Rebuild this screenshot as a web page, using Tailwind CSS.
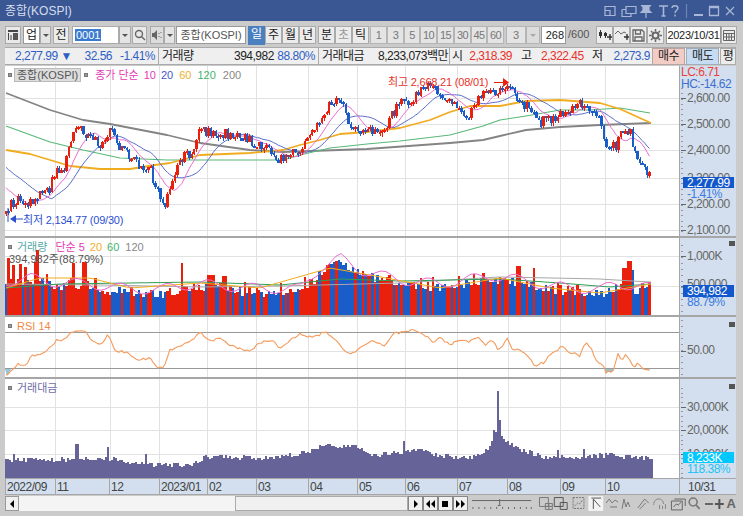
<!DOCTYPE html>
<html lang="ko">
<head>
<meta charset="UTF-8">
<title>종합(KOSPI)</title>
<script src="https://cdn.jsdelivr.net/npm/@tailwindcss/browser@4"></script>
</head>
<body class="w-[743px] h-[516px] overflow-hidden bg-[#cbcbcb] text-[11px] text-[#333] font-['Liberation_Sans','Noto_Sans_CJK_KR',sans-serif]">

<!-- title bar -->
<div class="h-[21px] bg-[#3a5693] flex items-center pl-[5px] pr-[5px] text-[12px] text-[#d5deee]">
	<span>종합(KOSPI)</span>
	<svg class="ml-auto" width="134" height="14" viewBox="0 0 134 14" fill="none" stroke="#a9b8d6" stroke-width="1.2">
		<path d="M1 2.500h10v9h-10zM1 6.500h5v5"/>
		<path d="M22 2.500h10v7h-10zM18 5.500h4M18 5.500v7h9v-3"/>
		<path d="M37 1.500h10l-2 1v4l2 2h-10l2-2v-4zM42 9v5" fill="#a9b8d6"/>
		<path d="M55 2h9M59.500 2v10M57.500 12h4" stroke-width="1.600"/>
		<path d="M68 4c0-3 6-3 6 0 0 2-3 2.500-3 5M71 10.500v2" stroke-width="1.400"/>
		<path d="M82.500 0v14" stroke="#6f84b3"/>
		<path d="M90 11h9" stroke-width="2"/>
		<path d="M105.500 2.500h9v9h-9z M105.500 3.500h9" stroke-width="1.300"/>
		<path d="M122 3l8 8M130 3l-8 8"/>
	</svg>
</div>

<!-- toolbar -->
<div class="h-[26px] pl-[5px] pt-[5px] flex items-start text-[#222] text-[12px]">
	<div class="w-[16px] h-[18px] border border-[#aaa] bg-[#e9e9e9] flex items-center justify-center"><svg width="12" height="12" viewBox="0 0 12 12"><path d="M1 1h10v2h-10z" fill="#444"/><path d="M6 4h5v7h-5z" fill="#555"/><path d="M1.500 4v7M4 6v5" stroke="#444" fill="none"/></svg></div>
	<div class="w-[17px] h-[18px] ml-[2px] border border-[#999] bg-white text-center leading-[16px]">업</div>
	<div class="w-[11px] h-[18px] border border-[#aaa] bg-[#e4e4e4] flex items-center justify-center"><div class="w-0 h-0 border-x-[3px] border-x-transparent border-t-[3px] border-t-[#555]"></div></div>
	<div class="w-[16px] h-[18px] ml-[2px] border border-[#aaa] bg-[#ececec] text-center leading-[16px]">전</div>
	<div class="w-[47px] h-[18px] ml-[3px] border border-[#aaa] bg-white pl-[2px] leading-[16px]"><span class="bg-[#3a7bd0] text-white text-[11px] px-px">0001</span></div>
	<div class="w-[12px] h-[18px] border border-[#aaa] bg-[#e4e4e4] flex items-center justify-center"><div class="w-0 h-0 border-x-[3px] border-x-transparent border-t-[3px] border-t-[#555]"></div></div>
	<div class="w-[15px] h-[18px] ml-px border border-[#aaa] bg-[#e9e9e9] flex items-center justify-center"><svg width="12" height="12" viewBox="0 0 12 12" fill="none" stroke="#666" stroke-width="1.400"><circle cx="5" cy="5" r="3.500"/><path d="M7.500 7.500l3.500 3.500"/></svg></div>
	<div class="w-[14px] h-[18px] ml-[3px] border border-[#aaa] bg-[#dcdcdc] flex items-center justify-center"><svg width="10" height="10" viewBox="0 0 10 10"><path d="M0 3h2l3-3v10l-3-3h-2z" fill="#666"/><path d="M7 3v1M7 6v1M9 2v1M9 7v1" stroke="#666"/></svg></div>
	<div class="w-[11px] h-[18px] border border-[#aaa] bg-[#e4e4e4] flex items-center justify-center"><div class="w-0 h-0 border-x-[3px] border-x-transparent border-t-[3px] border-t-[#555]"></div></div>
	<div class="w-[70px] h-[18px] ml-px border border-[#999] bg-white text-center leading-[16px] text-[#555] text-[11px]">종합(KOSPI)</div>
	<div class="flex ml-[2px]">
		<div class="w-[17px] h-[19px] bg-[#4a80c0] text-white text-center leading-[17px]">일</div>
		<div class="w-[17px] h-[18px] border border-[#aaa] bg-[#ececec] text-center leading-[16px]">주</div>
		<div class="w-[17px] h-[18px] border border-[#aaa] bg-[#ececec] text-center leading-[16px]">월</div>
		<div class="w-[17px] h-[18px] border border-[#aaa] bg-[#ececec] text-center leading-[16px]">년</div>
	</div>
	<div class="flex ml-[2px]">
		<div class="w-[17px] h-[18px] border border-[#aaa] bg-[#ececec] text-center leading-[16px]">분</div>
		<div class="w-[17px] h-[18px] border border-[#aaa] bg-[#ececec] text-center leading-[16px] text-[#999]">초</div>
		<div class="w-[17px] h-[18px] border border-[#aaa] bg-[#ececec] text-center leading-[16px]">틱</div>
	</div>
	<div class="flex ml-[1px] text-[#777] text-[11px] tracking-[-0.5px]">
		<div class="w-[17px] h-[18px] border border-[#b5b5b5] bg-[#e4e4e4] text-center leading-[16px]">1</div>
		<div class="w-[17px] h-[18px] border border-[#b5b5b5] bg-[#e4e4e4] text-center leading-[16px]">3</div>
		<div class="w-[16px] h-[18px] border border-[#b5b5b5] bg-[#e4e4e4] text-center leading-[16px]">5</div>
		<div class="w-[17px] h-[18px] border border-[#b5b5b5] bg-[#e4e4e4] text-center leading-[16px]">10</div>
		<div class="w-[17px] h-[18px] border border-[#b5b5b5] bg-[#e4e4e4] text-center leading-[16px]">15</div>
		<div class="w-[17px] h-[18px] border border-[#b5b5b5] bg-[#e4e4e4] text-center leading-[16px]">30</div>
		<div class="w-[16px] h-[18px] border border-[#b5b5b5] bg-[#e4e4e4] text-center leading-[16px]">45</div>
		<div class="w-[17px] h-[18px] border border-[#b5b5b5] bg-[#e4e4e4] text-center leading-[16px]">60</div>
	</div>
	<div class="w-[20px] h-[18px] ml-[2px] border border-[#b5b5b5] bg-[#e4e4e4] text-center leading-[16px] text-[#777] text-[11px]">3</div>
	<div class="w-[14px] h-[18px] border border-[#b5b5b5] bg-[#dcdcdc] flex items-center justify-center"><div class="w-0 h-0 border-x-[3px] border-x-transparent border-t-[3px] border-t-[#aaa]"></div></div>
	<div class="w-[25px] h-[18px] ml-px border border-[#999] bg-white text-right pr-px leading-[16px] text-[11px]">268</div>
	<div class="w-[30px] h-[18px] pl-[2px] leading-[17px] text-[#555] text-[11px]">/600</div>
	<div class="flex">
		<div class="w-[17px] h-[18px] border border-[#aaa] bg-[#ececec] flex items-center justify-center"><svg width="14" height="12" viewBox="0 0 14 12"><path d="M2.500 1v8M7.500 3v6" stroke="#333"/><path d="M1 3h3v4h-3zM6 4h3v3h-3z" fill="#333"/><path d="M12 5v6M9 8h5" stroke="#333" stroke-width="1.400"/></svg></div>
		<div class="w-[17px] h-[18px] border border-[#aaa] bg-[#ececec] flex items-center justify-center"><svg width="14" height="12" viewBox="0 0 14 12" fill="none" stroke="#666"><path d="M0 5l3-3 3 3 3-2 2 1"/><path d="M12 5v6M9 8h5" stroke="#333" stroke-width="1.400"/></svg></div>
		<div class="w-[17px] h-[18px] border border-[#aaa] bg-[#ececec] flex items-center justify-center"><svg width="13" height="13" viewBox="0 0 13 13" fill="none" stroke="#666" stroke-width="1.300"><path d="M1 1h9l2 2v9h-11z"/><path d="M3.500 1v4h5v-4M3 12v-4h7v4"/></svg></div>
		<div class="w-[17px] h-[18px] border border-[#aaa] bg-[#ececec] flex items-center justify-center"><svg width="13" height="13" viewBox="0 0 13 13" fill="none" stroke="#666" stroke-width="2"><circle cx="6.500" cy="6.500" r="3"/><path d="M6.500 0v2.500M6.500 10.500v2.500M0 6.500h2.500M10.500 6.500h2.500M2 2l1.500 1.500M9.500 9.500l1.500 1.500M11 2l-1.500 1.500M3.500 9.500l-1.500 1.500" stroke-width="1.500"/></svg></div>
	</div>
	<div class="w-[55px] h-[18px] ml-[2px] border border-[#999] bg-white text-center leading-[16px] text-[11px] tracking-[-0.3px]">2023/10/31</div>
	<div class="w-[16px] h-[18px] border border-[#aaa] bg-[#ececec] flex items-center justify-center"><svg width="12" height="12" viewBox="0 0 12 12" fill="none" stroke="#666"><path d="M.500 1.500h11v10h-11zM.500 4.500h11M3.500 4.500v7M6 4.500v7M8.500 4.500v7M.500 8h11"/></svg></div>
</div>

<!-- quote strip -->
<div class="h-[18px] ml-[5px] mr-[7px] flex items-center bg-[#efefef] border-y border-[#aaa] whitespace-nowrap text-[#222] text-[12px] tracking-[-0.5px]">
	<div class="w-[65px] pl-[10px] text-[#2f5fc4]">2,277.99 ▼</div>
	<div class="w-[42px] text-right text-[#2f5fc4]">32.56</div>
	<div class="w-[43px] text-right text-[#2f5fc4]">-1.41%</div>
	<div class="w-[76px] pl-[3px] ml-[3px] border-l border-[#aaa]">거래량</div>
	<div class="w-[37px] text-right">394,982</div>
	<div class="w-[44px] text-right text-[#2f5fc4]">88.80%</div>
	<div class="w-[60px] pl-[3px] ml-[3px] border-l border-[#aaa]">거래대금</div>
	<div class="w-[70px] text-right">8,233,073백만</div>
	<div class="w-[20px] pl-[2px] ml-[1px] border-l border-[#aaa]">시</div>
	<div class="w-[43px] text-right text-[#e8312a]">2,318.39</div>
	<div class="w-[29px] pl-[9px]">고</div>
	<div class="w-[42px] text-right text-[#e8312a]">2,322.45</div>
	<div class="w-[29px] pl-[9px]">저</div>
	<div class="w-[38px] text-right text-[#2f5fc4] overflow-hidden">2,273.9</div>
	<div class="w-[33px] h-[17px] ml-[2px] bg-[#f2cdc6] border border-[#b9a5a0] text-center leading-[15px]">매수</div>
	<div class="w-[33px] h-[17px] ml-px bg-[#c5dcf2] border border-[#a0adb9] text-center leading-[15px]">매도</div>
	<div class="w-[16px] h-[17px] ml-px bg-[#ececec] border border-[#aaa] text-center leading-[15px]">평</div>
</div>

<!-- chart panels -->
<div class="mt-px ml-[5px] w-[731px] flex flex-col">
	<div class="relative flex h-[172px] bg-white">
		<svg id="pricePlot" width="674" height="172" viewBox="5 66 674 172"></svg>
		<svg id="priceAxis" width="57" height="172" viewBox="679 66 57 172" class="bg-[#d3dfee]"></svg>
		<div class="absolute left-[3px] top-px flex items-center text-[11px] whitespace-nowrap">
			<span class="w-[4px] h-[4px] bg-[#999] border border-[#777] mr-[2px]"></span>
			<span class="bg-[#ddd] border border-[#bbb] text-[#555] px-[2px] leading-[12px]">종합(KOSPI)</span>
			<span class="w-[4px] h-[4px] bg-[#999] border border-[#777] ml-[3px] mr-[7px]"></span>
			<span class="text-[#e23bb5]">종가 단순</span>
			<span class="text-[#e23bb5] ml-[5px]">10</span>
			<span class="text-[#3f55c8] ml-[5px]">20</span>
			<span class="text-[#eeb02b] ml-[6px]">60</span>
			<span class="text-[#43b46a] ml-[6px]">120</span>
			<span class="text-[#888] ml-[7px]">200</span>
		</div>
		<div class="absolute left-[383px] top-[8px] text-[11px] tracking-[-0.2px] text-[#e8312a] whitespace-nowrap">최고 2,668.21 (08/01)</div>
		<div class="absolute left-[18px] top-[146px] text-[11px] tracking-[-0.2px] text-[#2c4fcf] whitespace-nowrap">최저 2,134.77 (09/30)</div>
	</div>
	<div class="relative flex h-[79px] bg-white">
		<svg id="volPlot" width="674" height="79" viewBox="5 238 674 79"></svg>
		<svg id="volAxis" width="57" height="79" viewBox="679 238 57 79" class="bg-[#d3dfee]"></svg>
		<div class="absolute left-[3px] top-[1px] flex items-center text-[11px] whitespace-nowrap">
			<span class="w-[4px] h-[4px] bg-[#999] border border-[#777] mr-[5px]"></span>
			<span class="text-[#55a8a8]">거래량</span>
			<span class="text-[#e23bb5] ml-[8px]">단순 5</span>
			<span class="text-[#eeb02b] ml-[5px]">20</span>
			<span class="text-[#43b46a] ml-[5px]">60</span>
			<span class="text-[#888] ml-[6px]">120</span>
		</div>
		<div class="absolute left-[4px] top-[13px] text-[11px] text-[#555] whitespace-nowrap">394,982주(88.79%)</div>
	</div>
	<div class="relative flex h-[62px] bg-white">
		<svg id="rsiPlot" width="674" height="62" viewBox="5 317 674 62"></svg>
		<svg id="rsiAxis" width="57" height="62" viewBox="679 317 57 62" class="bg-[#d3dfee]"></svg>
		<div class="absolute left-[3px] top-[1px] flex items-center text-[11px] whitespace-nowrap">
			<span class="w-[4px] h-[4px] bg-[#999] border border-[#777] mr-[5px]"></span>
			<span class="text-[#f08a45]">RSI 14</span>
		</div>
	</div>
	<div class="relative flex h-[99px] bg-white">
		<svg id="moneyPlot" width="674" height="99" viewBox="5 379 674 99"></svg>
		<svg id="moneyAxis" width="57" height="99" viewBox="679 379 57 99" class="bg-[#d3dfee]"></svg>
		<div class="absolute left-[3px] top-[1px] flex items-center text-[11px] whitespace-nowrap">
			<span class="w-[4px] h-[4px] bg-[#999] border border-[#777] mr-[5px]"></span>
			<span class="text-[#6e6ea8]">거래대금</span>
		</div>
	</div>
	<!-- date axis -->
	<svg id="dateAxis" width="731" height="17" viewBox="5 478 731 17" class="bg-[#d3dfee]"></svg>
</div>

<!-- scroll bar and playback row -->
<div class="h-[15px] mt-px ml-[5px] w-[731px] flex items-stretch">
	<div class="w-[14px] bg-[#f0f0f0] border border-[#999] flex items-center justify-center"><div class="w-0 h-0 border-y-[4px] border-y-transparent border-r-[4px] border-r-black"></div></div>
	<div class="w-[219px] bg-[#f4f4f4]"></div>
	<div class="w-[175px] bg-[#f0f0f0] border border-[#aaa]"></div>
	<div class="w-[15px] bg-[#f0f0f0] border border-[#888] flex items-center justify-center"><div class="w-0 h-0 border-y-[4px] border-y-transparent border-l-[4px] border-l-black"></div></div>
	<div class="w-[15px] bg-[#f0f0f0] border border-[#888] flex items-center justify-center"><svg width="9" height="8" viewBox="0 0 9 8"><path d="M4 0v8l-4-4zM9 0v8l-4-4z"/></svg></div>
	<div class="w-[15px] bg-[#f0f0f0] border border-[#888] flex items-center justify-center"><div class="w-[6px] h-[6px] bg-black"></div></div>
	<div class="w-[15px] bg-[#f0f0f0] border border-[#888] flex items-center justify-center"><svg width="9" height="8" viewBox="0 0 9 8"><path d="M0 0v8l4-4zM5 0v8l4-4z"/></svg></div>
	<svg width="68" height="15" viewBox="0 0 68 15" class="ml-[2px]" stroke="#666" fill="none">
		<path d="M2 4.500h60M30 3v6M28 9.500h3" stroke-width="1"/>
		<path d="M3 11v2M9 11v2M15 11v2M21 11v2M27 11v2M33 11v2M39 11v2M45 11v2M51 11v2M57 11v2M62 11v2" stroke-width="1"/>
	</svg>
	<svg width="197" height="15" viewBox="0 0 197 15" fill="none" stroke="#777">
		<path d="M2.500 1.500h9v9h-9zM8.500 7.500h7v6h-7zM12 7.500v6M8.500 10.500h7"/>
		<path d="M17.500 1.500h9v9h-9zM23.500 6.500h7v7h-7z" stroke="#555"/>
		<path d="M36.500 1.500h11v11h-11zM38 10l3-3 2 1 3-4" stroke-dasharray="2 1"/>
		<rect x="52" y="0" width="15" height="15" fill="#f4f4f4" stroke="none"/>
		<path d="M55 2h10M57 3v10M57 3l7 8" stroke="#555"/>
		<path d="M70 7l3-4 3 4 3-3 3 2M74 11h7"/>
		<path d="M86 13l2-10 2 8 2-5 2 5"/>
		<path d="M102 12l7-9 4 4M104 13l6-6"/>
		<path d="M118 9c0-8 10-8 10-1M124 9v4M127 10v3M130 8v5" stroke="#888"/>
		<path d="M136 5h11v9h-11zM139 3h11v7M138 11l3-3 2 1 3-3" stroke="#666"/>
		<circle cx="158" cy="6" r="4" stroke="#777" stroke-width="1.600"/><path d="M161 9l3.500 4" stroke="#777" stroke-width="1.800"/>
		<path d="M170 8h8" stroke="#666" stroke-width="2"/>
		<path d="M180 8h9M184.500 3v10" stroke="#555" stroke-width="2"/>
	</svg>
	<span class="ml-[-5px] text-[13px] font-bold leading-[15px] text-[#666]">A</span>
</div>

<script>
// seeded so every render is the same
let seed = 20231031
function rnd() {
	seed = (seed * 1664525 + 1013904223) % 4294967296
	return seed / 4294967296
}
function lerp(pts, x) {
	if (x <= pts[0][0]) return pts[0][1]
	for (let i = 1; i < pts.length; i++) {
		if (x <= pts[i][0]) {
			const t = (x - pts[i - 1][0]) / (pts[i][0] - pts[i - 1][0])
			return pts[i - 1][1] + (pts[i][1] - pts[i - 1][1]) * t
		}
	}
	return pts[pts.length - 1][1]
}
function poly(pts, color, w) {
	return `<polyline fill="none" stroke="${color}" stroke-width="${w}" stroke-linejoin="round" points="${pts.map(p => p[0].toFixed(1) + ',' + p[1].toFixed(1)).join(' ')}"/>`
}
function txt(x, y, s, color, extra) {
	return `<text x="${x}" y="${y}" fill="${color}" font-size="12" letter-spacing="-0.5" font-family="Liberation Sans, Noto Sans CJK KR, sans-serif" ${extra || ''}>${s}</text>`
}

const RED = '#e8200c', BLUE = '#1a5cc8', GRID = '#e2e2e2', BORDER = '#a6a6a6'
const vx = [55, 110, 159, 207, 256, 308, 357, 405, 457, 508, 560, 605]

const pricePath = [[5,208],[13,203],[20,195],[25,207],[30,200],[40,195],[50,188],[55,172],[65,165],[75,130],[80,128],[90,138],[100,143],[110,127],[115,141],[125,155],[135,158],[140,165],[150,168],[155,185],[160,195],[165,205],[170,185],[175,170],[185,155],[195,152],[200,128],[205,133],[215,133],[230,135],[245,138],[260,145],[270,150],[280,160],[290,155],[300,148],[310,135],[320,120],[330,103],[340,103],[345,112],[350,125],[360,130],[375,130],[385,127],[390,115],[400,105],[410,100],[420,90],[430,87],[440,95],[450,100],[460,110],[470,115],[480,95],[490,92],[500,90],[510,92],[520,100],[530,110],[540,122],[550,118],[555,120],[565,110],[575,110],[585,100],[590,108],[600,120],[605,145],[615,148],[620,135],[630,133],[635,155],[645,172],[652,180]]
const ma200 = [[6,93],[50,110],[83,120],[110,124],[167,135],[200,143],[250,150],[283,152],[367,149],[450,143],[483,140],[500,136],[526,130],[560,127],[600,125],[651,123]]
const ma120 = [[6,126],[50,142],[83,150],[120,158],[167,160],[250,160],[283,160],[300,155],[330,148],[367,144],[400,141],[450,135],[483,126],[500,120],[526,116],[560,110],[590,110],[620,108],[650,113]]
const ma60 = [[6,150],[30,154],[50,160],[70,166],[100,169],[130,169],[155,165],[170,163],[200,155],[250,153],[283,150],[300,145],[320,140],[340,134],[367,132],[400,128],[430,120],[450,112],[470,106],[500,106],[526,101],[560,100],[600,103],[620,109],[651,123]]

const N = 268, STEP = 2.41
const closes = []
for (let i = 0; i < N; i++) closes.push(lerp(pricePath, 6 + i * STEP) + (rnd() - 0.5) * 11)
function movAvg(arr, n, before) {
	return arr.map((_, i) => {
		let s = 0
		for (let k = i - n + 1; k <= i; k++) s += k < 0 ? before : arr[k]
		return [6 + i * STEP, s / n]
	})
}

// price panel
let h = ''
for (const y of [98, 124, 150, 178, 204, 230]) h += `<rect x="5" y="${y}" width="674" height="1" fill="${GRID}"/>`
for (const x of vx) h += `<rect x="${x}" y="66" width="1" height="172" fill="${GRID}"/>`
h += poly(ma200, '#848484', 1.8) + poly(ma120, '#58b878', 1.1) + poly(ma60, '#f0ac1e', 1.8)
h += poly(movAvg(closes, 20, 165), '#5a6ec8', 1) + poly(movAvg(closes, 10, 185), '#ec6cd0', 1)
closes.forEach((c, i) => {
	const x = Math.round(5 + i * STEP)
	const w = Math.round(5 + (i + 1) * STEP) - x
	const prev = i ? closes[i - 1] : c + 3
	let top = Math.min(c, prev), bot = Math.max(c, prev)
	if (bot - top < 2) bot = top + 2
	const col = c < prev ? RED : BLUE
	const wt = top - rnd() * 2.5, wb = bot + rnd() * 3
	h += `<rect x="${x + 1}" y="${wt.toFixed(0)}" width="1" height="${(wb - wt).toFixed(0)}" fill="${col}"/>`
	h += `<rect x="${x}" y="${top.toFixed(0)}" width="${w}" height="${(bot - top).toFixed(0)}" fill="${col}"/>`
})
// high and low markers
h += `<path d="M494 82.500h9" stroke="${RED}"/><path d="M503 78l6 4.500-6 4.500z" fill="${RED}"/>`
h += `<path d="M8 208v14" stroke="#2c4fcf"/><path d="M10 219l6-4v8z" fill="#2c4fcf"/><path d="M14 219h9" stroke="#2c4fcf"/>`
h += `<rect x="5" y="236" width="674" height="2" fill="${BORDER}"/>`
pricePlot.innerHTML = h

function axisTicks(y0, y1, step) {
	let s = ''
	for (let y = y0; y < y1; y += step) s += `<rect x="681" y="${Math.round(y)}" width="2" height="1" fill="#999"/>`
	return s
}
let a = axisTicks(88, 238, 5.3)
a += txt(681, 76, 'LC:6.71', '#e8413a') + txt(681, 88, 'HC:-14.62', '#3c6fd0')
for (const [y, s] of [[98, '2,600.00'], [124, '2,500.00'], [150, '2,400.00'], [178, '2,300.00'], [204, '2,200.00'], [230, '2,100.00']]) {
	a += `<rect x="681" y="${y}" width="5" height="1" fill="#666"/>` + txt(687, y + 4, s, '#666')
}
a += `<rect x="683" y="177" width="51" height="11" fill="#1258cc"/>` + txt(687, 187, '2,277.99', '#fff') + txt(687, 198, '-1.41%', '#3c7be0')
a += `<rect x="679" y="66" width="1" height="172" fill="${BORDER}"/><rect x="679" y="236" width="57" height="2" fill="${BORDER}"/>`
priceAxis.innerHTML = a

// volume panel
h = ''
for (const y of [256, 286]) h += `<rect x="5" y="${y}" width="674" height="1" fill="${GRID}"/>`
for (const x of vx) h += `<rect x="${x}" y="238" width="1" height="79" fill="${GRID}"/>`
const volBase = [[5,286],[30,282],[50,286],[90,288],[120,292],[160,294],[175,290],[200,288],[250,292],[300,293],[320,272],[340,262],[360,274],[400,284],[440,288],[490,280],[510,282],[550,290],[600,294],[615,288],[640,290],[652,292]]
// [from x, to x, top y, colour] for the bars that stand out in the picture
const volPeaks = [[7,9,258,RED],[12,14,265,RED],[19,21,264,RED],[24,26,267,RED],[33,35,262,RED],[36,38,250,RED],[40,42,278,BLUE],[72,74,263,RED],[82,85,262,RED],[180,182,263,RED],[206,212,275,RED],[222,225,276,RED],[516,518,266,RED],[531,533,268,RED],[622,624,268,RED],[627,629,261,RED],[630,633,270,BLUE],[641,643,283,RED]]
const volX = []
for (let i = 0; i < N; i++) {
	const x = Math.round(5 + i * STEP)
	const w = Math.round(5 + (i + 1) * STEP) - x
	const prev = i ? closes[i - 1] : closes[0]
	const up = closes[i] < prev
	let t = lerp(volBase, x) + (rnd() - 0.5) * 9
	let col = up ? RED : BLUE
	if (up && rnd() > 0.7) t -= 8
	for (const p of volPeaks) if (x >= p[0] && x <= p[1]) { t = p[2]; col = p[3] }
	h += `<rect x="${x}" y="${t.toFixed(0)}" width="${w}" height="${(315 - t).toFixed(0)}" fill="${col}"/>`
}
const volA = [], volB = [], volC = [], volD = []
for (let x = 6; x <= 651; x += 5) {
	const b = lerp(volBase, x)
	volA.push([x, b - 4 + Math.sin(x / 7) * 5])
	volB.push([x, lerp([[6,288],[40,278],[90,278],[130,288],[200,283],[260,288],[330,268],[370,275],[440,288],[500,278],[550,288],[600,293],[650,284]], x)])
	volC.push([x, lerp([[6,288],[60,284],[130,283],[200,282],[280,285],[340,279],[400,281],[500,279],[560,283],[610,287],[650,284]], x)])
	volD.push([x, lerp([[6,284],[100,285],[200,287],[280,286],[400,283],[500,277],[600,279],[650,282]], x)])
}
h += poly(volD, '#a8a8a8', 1) + poly(volC, '#2f9e55', 1) + poly(volB, '#f0ac1e', 1) + poly(volA, '#ec6cd0', 1)
h += `<rect x="5" y="315" width="674" height="2" fill="${BORDER}"/>`
volPlot.innerHTML = h
a = axisTicks(245, 315, 6)
a += `<rect x="681" y="256" width="5" height="1" fill="#666"/>` + txt(687, 260, '1,000K', '#666')
a += `<rect x="681" y="286" width="5" height="1" fill="#666"/>` + txt(687, 288, '500,000', '#666')
a += `<rect x="683" y="285" width="51" height="12" fill="#1258cc"/>` + txt(687, 295, '394,982', '#fff') + txt(687, 306, '88.79%', '#3c7be0')
a += `<rect x="729" y="241" width="6" height="5" fill="#555"/><rect x="679" y="238" width="1" height="79" fill="${BORDER}"/><rect x="679" y="315" width="57" height="2" fill="${BORDER}"/>`
volAxis.innerHTML = a

// RSI panel
h = ''
for (const x of vx) h += `<rect x="${x}" y="317" width="1" height="62" fill="${GRID}"/>`
h += `<rect x="5" y="351" width="674" height="1" fill="${GRID}"/><rect x="5" y="332" width="674" height="1" fill="#999"/><rect x="5" y="368" width="674" height="1" fill="#999"/>`
h += `<path d="M5 369h6l-4 7zM605 369h9l-2 3h-6zM641 369h10l-4 1z" fill="#8fc8e0"/>`
const rsi = [[6,376],[12,370],[18,364],[25,365],[33,355],[42,354],[50,347],[57,340],[65,340],[72,331],[78,332],[85,330],[90,340],[100,345],[108,335],[115,350],[125,352],[130,355],[140,360],[150,358],[158,367],[163,369],[170,350],[180,345],[190,342],[200,331],[210,342],[220,337],[230,345],[245,350],[250,350],[262,342],[272,340],[280,349],[290,340],[300,334],[312,338],[325,332],[335,340],[345,352],[352,354],[360,348],[372,340],[385,345],[395,333],[405,332],[415,330],[425,335],[432,342],[440,338],[450,345],[458,340],[468,342],[478,336],[486,345],[493,340],[498,351],[508,338],[511,350],[521,350],[533,363],[536,366],[545,362],[550,354],[563,346],[570,353],[576,352],[579,357],[586,342],[593,352],[596,360],[605,368],[606,372],[613,371],[618,354],[621,360],[626,355],[635,368],[638,362],[641,368],[646,369],[650,370]]
const rsiLine = []
for (let i = 0; i < N; i++) {
	const x = 6 + i * STEP
	rsiLine.push([x, lerp(rsi, x) + (rnd() - 0.5) * 2.5])
}
h += poly(rsiLine, '#f59a5c', 1.1)
h += `<rect x="5" y="377" width="674" height="2" fill="${BORDER}"/>`
rsiPlot.innerHTML = h
a = axisTicks(320, 377, 6)
a += `<rect x="681" y="351" width="5" height="1" fill="#666"/>` + txt(687, 354, '50.00', '#666')
a += `<rect x="729" y="322" width="6" height="5" fill="#555"/><rect x="679" y="317" width="1" height="62" fill="${BORDER}"/><rect x="679" y="377" width="57" height="2" fill="${BORDER}"/>`
rsiAxis.innerHTML = a

// trading value panel
h = ''
for (const y of [407, 430, 454]) h += `<rect x="5" y="${y}" width="674" height="1" fill="${GRID}"/>`
for (const x of vx) h += `<rect x="${x}" y="379" width="1" height="99" fill="${GRID}"/>`
const moneyBase = [[5,460],[50,460],[100,458],[150,465],[190,465],[205,457],[260,458],[300,454],[320,446],[355,446],[370,455],[400,452],[420,450],[440,456],[470,458],[480,453],[490,447],[493,432],[496,431],[505,440],[520,450],[550,458],[570,456],[585,458],[600,455],[650,458]]
const moneySpikes = { 13: 454, 76: 444, 77: 444, 108: 447, 146: 454, 403: 441, 497: 391, 498: 391, 499: 420, 500: 420, 558: 450, 584: 449, 605: 453 }
for (let x = 5; x < 652; x += 2) {
	const t = moneySpikes[x] || moneySpikes[x + 1] || lerp(moneyBase, x) + (rnd() - 0.5) * 5
	h += `<rect x="${x}" y="${t.toFixed(0)}" width="2" height="${(478 - t).toFixed(0)}" fill="#656398"/>`
}
moneyPlot.innerHTML = h
a = axisTicks(388, 478, 4.7)
for (const [y, s] of [[407, '30,000K'], [430, '20,000K'], [454, '10,000K']]) {
	a += `<rect x="681" y="${y}" width="5" height="1" fill="#666"/>` + txt(687, y + 4, s, '#666')
}
a += `<rect x="683" y="452" width="51" height="11" fill="#00c8ff"/>` + txt(687, 462, '8,233K', '#fff') + txt(687, 473, '118.38%', '#22c4f4')
a += `<rect x="729" y="384" width="6" height="5" fill="#555"/><rect x="679" y="379" width="1" height="99" fill="${BORDER}"/>`
moneyAxis.innerHTML = a

// date axis
let d = `<rect x="5" y="478" width="731" height="1" fill="${BORDER}"/><rect x="5" y="494" width="731" height="1" fill="${BORDER}"/>`
const dates = [[5,'2022/09'],[55,'11'],[109,'12'],[159,'2023/01'],[207,'02'],[256,'03'],[308,'04'],[357,'05'],[405,'06'],[457,'07'],[507,'08'],[560,'09'],[605,'10'],[679,'']]
for (const [x, s] of dates) {
	d += `<rect x="${x}" y="478" width="1" height="17" fill="${BORDER}"/>` + txt(x + 2, 491, s, '#444')
}
d += txt(688, 491, '10/31', '#444')
dateAxis.innerHTML = d
</script>
</body>
</html>
